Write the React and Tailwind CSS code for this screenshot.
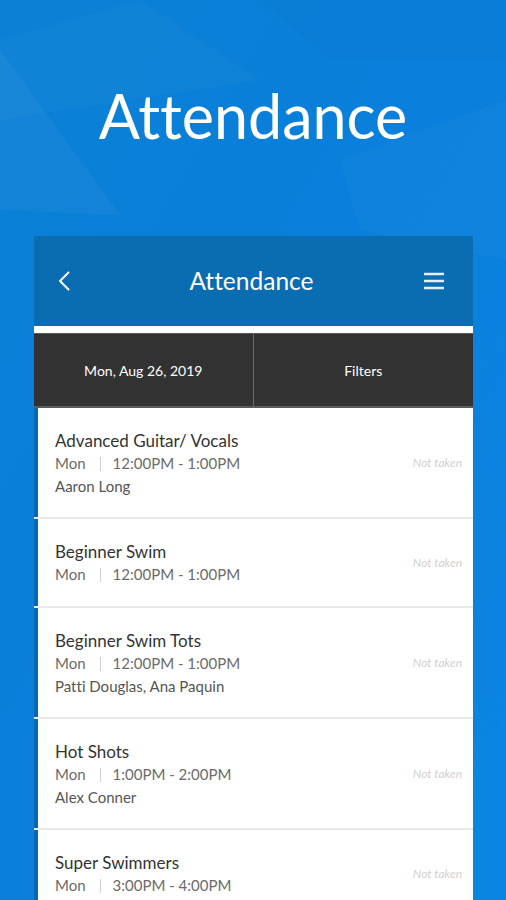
import React from 'react';

const classes = [
  { name: 'Advanced Guitar/ Vocals', day: 'Mon', time: '12:00PM - 1:00PM', staff: 'Aaron Long' },
  { name: 'Beginner Swim', day: 'Mon', time: '12:00PM - 1:00PM', staff: '' },
  { name: 'Beginner Swim Tots', day: 'Mon', time: '12:00PM - 1:00PM', staff: 'Patti Douglas, Ana Paquin' },
  { name: 'Hot Shots', day: 'Mon', time: '1:00PM - 2:00PM', staff: 'Alex Conner' },
  { name: 'Super Swimmers', day: 'Mon', time: '3:00PM - 4:00PM', staff: '' },
];

const Backdrop = () => (
  <svg className="absolute inset-0 w-full h-full" viewBox="0 0 506 900" preserveAspectRatio="none">
    <defs>
      <linearGradient id="bg" x1="0" y1="0" x2="1" y2="1">
        <stop offset="0" stopColor="#0b80d4" />
        <stop offset="0.5" stopColor="#0a7fdc" />
        <stop offset="1" stopColor="#0a86e2" />
      </linearGradient>
    </defs>
    <rect width="506" height="900" fill="url(#bg)" />
    <polygon points="0,40 140,0 260,80 0,120" fill="#ffffff" opacity="0.025" />
    <polygon points="0,50 120,215 0,210" fill="#ffffff" opacity="0.035" />
    <polygon points="260,0 506,0 506,60 330,60" fill="#000000" opacity="0.015" />
    <polygon points="340,160 506,100 506,260 360,230" fill="#ffffff" opacity="0.025" />
  </svg>
);

const Row = ({ item }) => (
  <div className="flex items-center border-l-4 border-[#0867ae] bg-white pl-[17px] pr-[11px] pt-[21px] pb-[20px]">
    <div className="flex-1 flex flex-col">
      <div className="text-[17px] leading-[23px] text-[#333333]">{item.name}</div>
      <div className="flex items-center text-[15px] leading-[23px] text-[#6b6b6b]">
        <span>{item.day}</span>
        <span className="ml-[14px] mr-[12px] w-px h-[14px] bg-[#cfcfcf]" />
        <span>{item.time}</span>
      </div>
      {item.staff && (
        <div className="text-[15px] leading-[22px] text-[#555555]">{item.staff}</div>
      )}
    </div>
    <div className="text-[12px] italic text-[#d0d0d0]">Not taken</div>
  </div>
);

export default function App() {
  return (
    <div
      className="relative w-[506px] h-[900px] overflow-hidden [font-variant-ligatures:none]"
      style={{ fontFamily: 'Lato, "Open Sans", sans-serif' }}
    >
      <Backdrop />
      <div className="relative flex flex-col">
        <div className="h-[236px] flex items-center justify-center pb-[6px]">
          <h1 className="text-[61px] leading-none text-white">Attendance</h1>
        </div>

        <div className="ml-[34px] mr-[33px] flex flex-col">
          <div className="h-[90px] bg-[#0a6db2] grid grid-cols-[1fr_auto_1fr] items-center pl-[24px] pr-[28px]">
            <svg width="12" height="20" viewBox="0 0 12 20" fill="none">
              <path d="M10.5 1.5 L2 10 L10.5 18.5" stroke="#ffffff" strokeWidth="2" strokeLinecap="round" strokeLinejoin="round" />
            </svg>
            <div className="text-[24.5px] text-white">Attendance</div>
            <svg className="justify-self-end" width="22" height="18" viewBox="0 0 22 18" fill="none">
              <path d="M1 2 H21 M1 9 H21 M1 16 H21" stroke="#e6eef6" strokeWidth="2.6" />
            </svg>
          </div>
          <div className="h-[7px] bg-white" />
          <div className="h-[75px] bg-[#323232] border-t border-b-2 border-[#5a5a5a] grid grid-cols-2 text-white text-[14px]">
            <div className="flex items-center justify-center border-r border-[#6a6a6a]">Mon, Aug 26, 2019</div>
            <div className="flex items-center justify-center">Filters</div>
          </div>
          <div className="flex flex-col">
            {classes.map((item, i) => (
              <React.Fragment key={item.name}>
                {i > 0 && <div className="h-[2px] bg-[#e9e9e9]" />}
                <Row item={item} />
              </React.Fragment>
            ))}
          </div>
        </div>
      </div>
    </div>
  );
}
